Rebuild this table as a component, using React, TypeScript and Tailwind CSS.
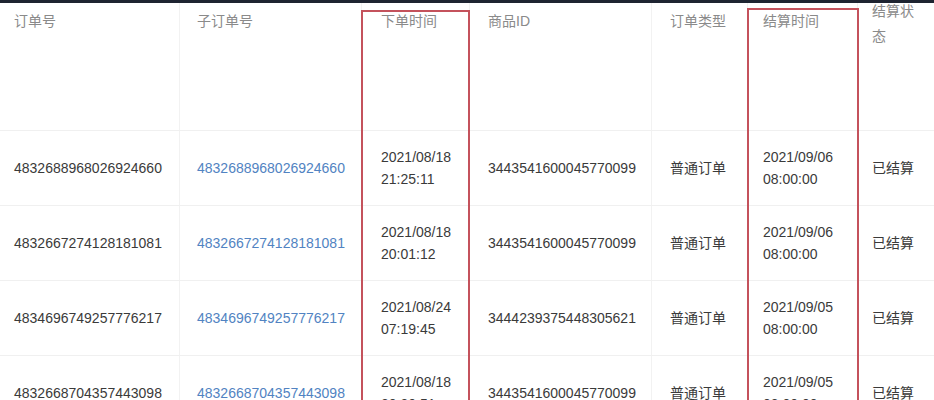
import React from "react"

type Row = {
  order: string
  sub: string
  date: string
  time: string
  item: string
  type: string
  sdate: string
  stime: string
  status: string
}

const rows: Row[] = [
  { order: "4832688968026924660", sub: "4832688968026924660", date: "2021/08/18", time: "21:25:11", item: "3443541600045770099", type: "普通订单", sdate: "2021/09/06", stime: "08:00:00", status: "已结算" },
  { order: "4832667274128181081", sub: "4832667274128181081", date: "2021/08/18", time: "20:01:12", item: "3443541600045770099", type: "普通订单", sdate: "2021/09/06", stime: "08:00:00", status: "已结算" },
  { order: "4834696749257776217", sub: "4834696749257776217", date: "2021/08/24", time: "07:19:45", item: "3444239375448305621", type: "普通订单", sdate: "2021/09/05", stime: "08:00:00", status: "已结算" },
  { order: "4832668704357443098", sub: "4832668704357443098", date: "2021/08/18", time: "20:30:51", item: "3443541600045770099", type: "普通订单", sdate: "2021/09/05", stime: "08:00:00", status: "已结算" },
]

const grid = "grid grid-cols-[180px_182px_108px_182px_96px_110px_76px]"
const cell = "border-r border-[#f2f2f2] flex items-center"

export default function App() {
  return (
    <div
      className="relative w-[934px] h-[400px] overflow-hidden bg-white text-[14px]"
      style={{ fontFamily: '"Liberation Sans", "Noto Sans CJK SC", sans-serif' }}
    >
      <div className="relative z-10 h-[3px] bg-[#1e2431]" />

      {/* header */}
      <div className={`${grid} h-[128px] border-b border-[#f0f0f0] text-[#8a8a8a]`}>
        <div className="border-r border-[#f2f2f2] pl-[14px] pt-2 leading-5">订单号</div>
        <div className="border-r border-[#f2f2f2] pl-[17px] pt-2 leading-5">子订单号</div>
        <div className="border-r border-[#f2f2f2] pl-[19px] pt-2 leading-5">下单时间</div>
        <div className="border-r border-[#f2f2f2] pl-[18px] pt-2 leading-5">商品ID</div>
        <div className="border-r border-[#f2f2f2] pl-[18px] pt-2 leading-5">订单类型</div>
        <div className="border-r border-[#f2f2f2] pl-[15px] pt-2 leading-5">结算时间</div>
        <div className="pl-[14px] pr-[16px] -mt-[4px] leading-[25px]">结算状态</div>
      </div>

      {rows.map((r) => (
        <div key={r.order} className={`${grid} h-[75px] border-b border-[#f0f0f0] text-[#3a3a3a]`}>
          <div className={`${cell} pl-[14px]`}>{r.order}</div>
          <div className={`${cell} pl-[17px] text-[#5183c2]`}>{r.sub}</div>
          <div className={`${cell} pl-[19px]`}>
            <div className="leading-[22px]">
              <div>{r.date}</div>
              <div>{r.time}</div>
            </div>
          </div>
          <div className={`${cell} pl-[18px]`}>{r.item}</div>
          <div className={`${cell} pl-[18px]`}>{r.type}</div>
          <div className={`${cell} pl-[15px]`}>
            <div className="leading-[22px]">
              <div>{r.sdate}</div>
              <div>{r.stime}</div>
            </div>
          </div>
          <div className="flex items-center pl-[14px]">{r.status}</div>
        </div>
      ))}

      {/* annotation boxes */}
      <div className="absolute left-[361px] top-[10px] w-[109px] h-[420px] border-2 border-[#c4525c]" />
      <div className="absolute left-[747px] top-[8px] w-[112px] h-[420px] border-2 border-[#c4525c]" />
    </div>
  )
}
